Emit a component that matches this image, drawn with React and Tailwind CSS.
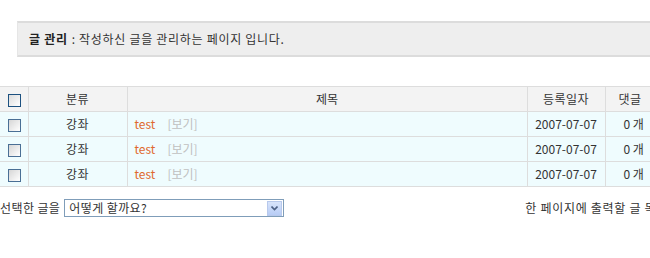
import React from "react";

function Check({ header }) {
  return (
    <span
      className={
        "inline-block w-[13px] h-[13px] border align-middle " +
        (header
          ? "border-[#1c5180] bg-gradient-to-br from-[#dcdcdc] to-white"
          : "border-[#4a6f95] bg-gradient-to-br from-[#d6d6d6] to-white")
      }
    />
  );
}

const rows = [0, 1, 2];

export default function App() {
  return (
    <div
      className="w-[650px] h-[258px] overflow-hidden bg-white text-[12px] text-[#333]"
      style={{ fontFamily: '"Noto Sans CJK KR", "Noto Sans", sans-serif' }}
    >
      <div className="pt-[21px] pl-[17px]">
        <div className="w-[700px] h-[36px] bg-[#eeeeee] border-t-2 border-b-2 border-l border-[#dcdcdc] border-l-[#e6e6e6] flex items-center pl-[11px] leading-none tracking-[0.7px]">
          <span className="font-bold text-[#222]">글 관리</span>
          <span className="ml-[4px]">: 작성하신 글을 관리하는 페이지 입니다.</span>
        </div>
      </div>

      <table className="mt-[29px] w-[720px] border-collapse table-fixed">
        <colgroup>
          <col className="w-[28px]" />
          <col className="w-[99px]" />
          <col className="w-[400px]" />
          <col className="w-[78px]" />
          <col className="w-[60px]" />
          <col />
        </colgroup>
        <thead>
          <tr className="h-[25px] bg-[#f3f3f3]">
            <th className="border-t border-b border-r border-[#dddddd] font-normal text-center pl-[2px]">
              <Check header />
            </th>
            <th className="border border-[#dddddd] font-normal text-center tracking-[0.5px]">분류</th>
            <th className="border border-[#dddddd] font-normal text-center">제목</th>
            <th className="border border-[#dddddd] font-normal text-center tracking-[0.5px]">등록일자</th>
            <th className="border border-[#dddddd] font-normal text-left pl-[13px] tracking-[0.5px]">댓글</th>
            <th className="border border-[#dddddd]"></th>
          </tr>
        </thead>
        <tbody>
          {rows.map((i) => (
            <tr key={i} className="h-[25px] bg-[#effcfe]">
              <td className="border-b border-r border-[#dddddd] text-center pl-[2px]">
                <Check />
              </td>
              <td className="border border-[#dddddd] text-center tracking-[0.5px]">강좌</td>
              <td className="border border-[#dddddd] pl-[7px]">
                <span className="text-[#e0692f]">test</span>
                <span className="ml-[12px] text-[#c0c0c0]">[보기]</span>
              </td>
              <td className="border border-[#dddddd] text-center">2007-07-07</td>
              <td className="border border-[#dddddd] text-left pl-[18px]">0 개</td>
              <td className="border border-[#dddddd]"></td>
            </tr>
          ))}
        </tbody>
      </table>

      <div className="mt-[12px] flex items-center w-[760px]">
        <span className="whitespace-nowrap tracking-[0.4px]">선택한 글을</span>
        <div className="ml-[4px] w-[220px] h-[18px] border border-[#7f9db9] bg-white flex items-center">
          <span className="pl-[4px] flex-1 leading-none tracking-[0.4px]">어떻게 할까요?</span>
          <span className="w-[15px] h-[15px] mr-[1px] bg-gradient-to-b from-[#d8e4fb] to-[#b7ccf5] border border-[#b8c9ec] flex items-center justify-center">
            <svg width="7" height="5" viewBox="0 0 7 5">
              <path d="M0.5 0.5 L3.5 3.5 L6.5 0.5" fill="none" stroke="#4d6185" strokeWidth="1.6" />
            </svg>
          </span>
        </div>
        <span className="ml-[241px] whitespace-nowrap tracking-[0.7px]">한 페이지에 출력할 글 목록 수</span>
      </div>
    </div>
  );
}
